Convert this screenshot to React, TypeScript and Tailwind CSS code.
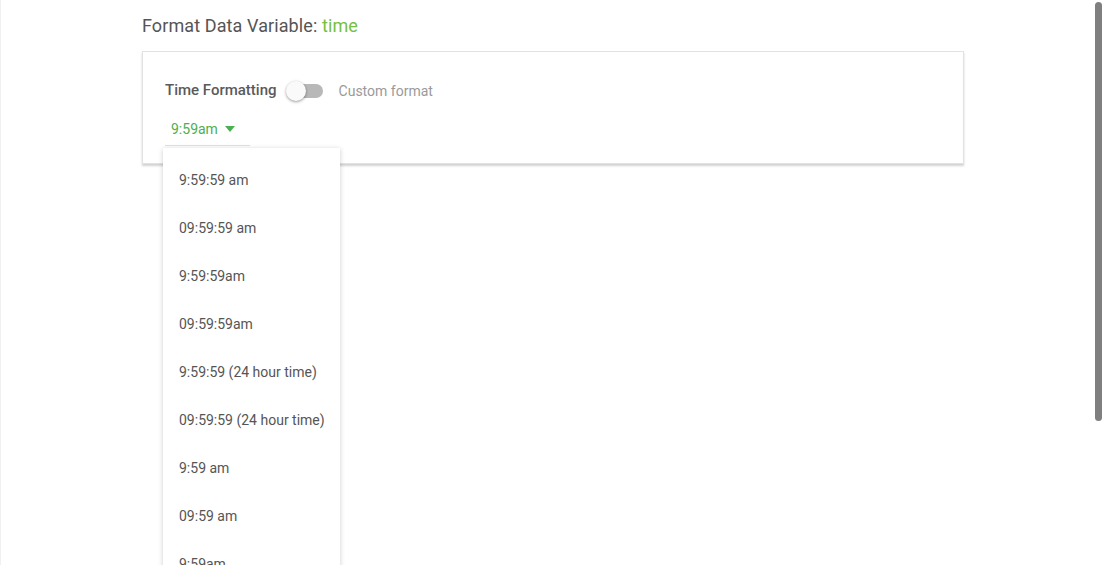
import React from "react";

const OPTIONS = [
  "9:59:59 am",
  "09:59:59 am",
  "9:59:59am",
  "09:59:59am",
  "9:59:59 (24 hour time)",
  "09:59:59 (24 hour time)",
  "9:59 am",
  "09:59 am",
  "9:59am",
  "09:59am",
];

function Toggle() {
  return (
    <div className="relative w-[37px] h-[20px] flex items-center">
      <div className="ml-[3px] w-[34px] h-[14px] rounded-full bg-[#b8b8b8]" />
      <div className="absolute left-0 top-0 w-[20px] h-[20px] rounded-full bg-[#fafafa] shadow-[0_1px_3px_rgba(0,0,0,0.4)]" />
    </div>
  );
}

export default function App() {
  return (
    <div
      className="relative h-screen overflow-hidden bg-white border-l border-[#f0f0f0]"
      style={{ fontFamily: "Roboto, 'Liberation Sans', sans-serif" }}
    >
      <div className="pl-[141px] pt-[14px] w-[963px]">
        <h1 className="text-[18px] leading-[24px] text-[#555] tracking-[0.1px]">
          Format Data Variable: <span className="text-[#76c043]">time</span>
        </h1>

        <div className="relative mt-[13px] h-[113px] bg-white border border-[#e2e2e2] shadow-[0_2px_2px_rgba(0,0,0,0.18)] pl-[22px] pt-[27px]">
          <div className="flex items-center h-[22px]">
            <span className="text-[15px] font-medium text-[#5a5a5a]">Time Formatting</span>
            <div className="ml-[9px] mt-[2px]">
              <Toggle />
            </div>
            <span className="ml-[16px] mt-[3px] text-[14px] text-[#9a9a9a]">Custom format</span>
          </div>

          <div className="mt-[12px] w-[85px] h-[33px] border-b border-[#e0e0e0] flex items-start pt-[8px] pl-[6px]">
            <span className="text-[14px] leading-[16px] text-[#4caf50]">9:59am</span>
            <svg className="ml-[7px] mt-[5px]" width="10" height="6" viewBox="0 0 10 6">
              <path d="M0 0 L10 0 L5 6 Z" fill="#4caf50" />
            </svg>
          </div>

          <div className="absolute left-[20px] top-[96px] w-[177px] h-[600px] bg-white shadow-[0_1px_5px_rgba(0,0,0,0.2)] pt-[8px] z-10">
            {OPTIONS.map((o) => (
              <div key={o} className="h-[48px] flex items-center pl-[16px] text-[14px] text-[#555]">
                {o}
              </div>
            ))}
          </div>
        </div>
      </div>

      <div className="absolute right-[3px] top-[2px] w-[7px] h-[419px] rounded-full bg-[#7f7f7f]" />
    </div>
  );
}
